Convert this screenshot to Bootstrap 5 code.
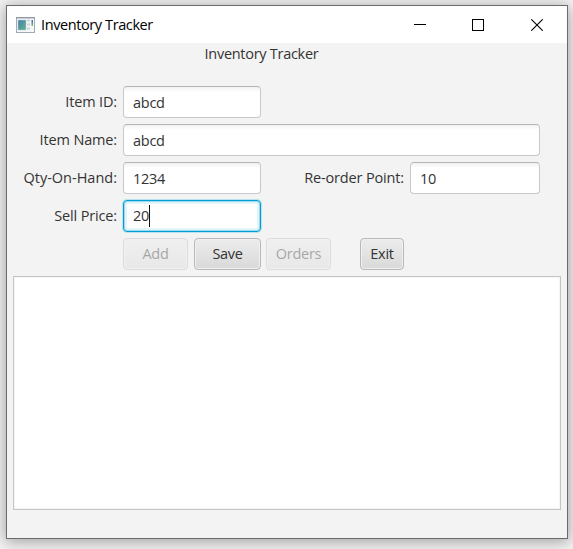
<!DOCTYPE html>
<html lang="en">
<head>
<meta charset="utf-8">
<title>Inventory Tracker</title>
<meta name="viewport" content="width=device-width, initial-scale=1">
<link href="https://cdn.jsdelivr.net/npm/bootstrap@5.3.0/dist/css/bootstrap.min.css" rel="stylesheet">
<style>
body{font-family:"Open Sans","Noto Sans",sans-serif;font-size:14.5px;line-height:20px;letter-spacing:-.28px;color:#333;background:#f4f4f4;height:549px;overflow:hidden;padding:5px 5px 10px 6px}
.window{width:562px;height:534px;border:1px solid #6b6b6b;background:#f3f3f3;box-shadow:0 2px 14px 1px rgba(0,0,0,.34)}
.titlebar{height:37px;background:#fff;color:#000;padding:0 24px 0 9px;letter-spacing:-.4px}
.caption{margin-left:6px}
.controls{gap:46px}
.control-close{margin-left:1px}
.heading{height:43px;padding:1px 51px 0 0}
.form-rows{display:flex;flex-direction:column;gap:6px;padding-left:6px}
.line{height:32px}
.lbl{width:104px;margin-right:6px;text-align:right;white-space:nowrap;letter-spacing:-.15px}
.lbl-2{width:143px}
.lbl-hyphen{letter-spacing:0}
.form-control.field{height:32px;width:138px;padding:0 9px;font-size:14.5px;letter-spacing:-.25px;color:#333;border:1px solid #c8c8c8;border-top-color:#b5b5b5;border-radius:4px;background:linear-gradient(#f1f1f1,#fff 5px)}
.form-control.field-wide{width:417px}
.form-control.field-sm{width:130px}
.form-control.focused{border-color:#039ed3;box-shadow:0 0 0 1px #b9e1ee,inset 0 0 0 1px #9bd9ec,inset 0 0 0 3px #e3f5fa;background:#fff}
.caret{width:1px;height:22px;background:#111}
.btn.push{height:32px;padding:0;font-size:14.5px;line-height:20px;letter-spacing:-.3px;color:#333;border:1px solid #b8b8b8;border-radius:4px;background:linear-gradient(#ececec,#d9d9d9);box-shadow:inset 0 0 0 1px #f0f0f0}
.btn.push:disabled{opacity:.4}
.w-add{width:65px}
.w-save{width:67px;margin-left:6px}
.w-orders{width:65px;margin-left:5px}
.w-exit{width:44px;margin-left:29px}
.output{width:548px;height:234px;margin:6px 0 0 6px;border:1px solid #c5c5c5;background:#fff;box-shadow:inset 0 0 0 1px #f5f5f5}
</style>
<script src="https://cdn.jsdelivr.net/npm/bootstrap@5.3.0/dist/js/bootstrap.bundle.min.js"></script>
</head>
<body>
<main class="window">
  <header class="titlebar d-flex align-items-center">
    <svg width="19" height="16" viewBox="0 0 19 16" aria-hidden="true">
      <defs><linearGradient id="g" x1="0" y1="0" x2="1" y2="1"><stop stop-color="#4a7fae"/><stop offset="1" stop-color="#62b489"/></linearGradient>
      <linearGradient id="h" x1="0" y1="0" x2="0" y2="1"><stop stop-color="#3f68b5"/><stop offset="1" stop-color="#79bd69"/></linearGradient></defs>
      <rect x=".5" y=".5" width="18" height="15" fill="#f5f7f9" stroke="#a3abb5"/>
      <path d="M0 .7h19" stroke="#8f98a3" stroke-width="1.4"/>
      <rect x="2" y="3" width="8" height="10" fill="url(#g)" stroke="#b7cbd6" stroke-width=".5"/>
      <path d="M11 3.5h3M11 7.5h3M11 11.5h3" stroke="#cfd2d6" stroke-width="2"/>
      <rect x="15.5" y="3" width="1.5" height="6" fill="url(#h)"/>
    </svg>
    <span class="caption">Inventory Tracker</span>
    <div class="controls d-flex align-items-center ms-auto">
      <svg width="12" height="12" aria-hidden="true"><path d="M0 5.5h12" stroke="#000"/></svg>
      <svg width="12" height="12" aria-hidden="true"><rect x=".5" y=".5" width="11" height="11" fill="none" stroke="#000"/></svg>
      <svg class="control-close" width="12" height="12" aria-hidden="true"><path d="M.3.3l11.4 11.4M11.7.3L.3 11.7" stroke="#000" stroke-width="1.1"/></svg>
    </div>
  </header>
  <div class="heading text-center">Inventory Tracker</div>
  <form class="form-rows">
    <div class="line d-flex align-items-center">
      <label class="lbl" for="itemId">Item ID:</label>
      <input class="form-control field" id="itemId" value="abcd">
    </div>
    <div class="line d-flex align-items-center">
      <label class="lbl" for="itemName">Item Name:</label>
      <input class="form-control field field-wide" id="itemName" value="abcd">
    </div>
    <div class="line d-flex align-items-center">
      <label class="lbl lbl-hyphen" for="qty">Qty-On-Hand:</label>
      <input class="form-control field" id="qty" value="1234">
      <label class="lbl lbl-2" for="reorder">Re-order Point:</label>
      <input class="form-control field field-sm" id="reorder" value="10">
    </div>
    <div class="line d-flex align-items-center">
      <span class="lbl">Sell Price:</span>
      <div class="form-control field focused d-flex align-items-center" role="textbox" aria-label="Sell Price">20<span class="caret"></span></div>
    </div>
    <div class="line d-flex">
      <span class="lbl"></span>
      <button type="button" class="btn push w-add" disabled>Add</button>
      <button type="button" class="btn push w-save">Save</button>
      <button type="button" class="btn push w-orders" disabled>Orders</button>
      <button type="button" class="btn push w-exit">Exit</button>
    </div>
  </form>
  <div class="output"></div>
</main>
</body>
</html>
